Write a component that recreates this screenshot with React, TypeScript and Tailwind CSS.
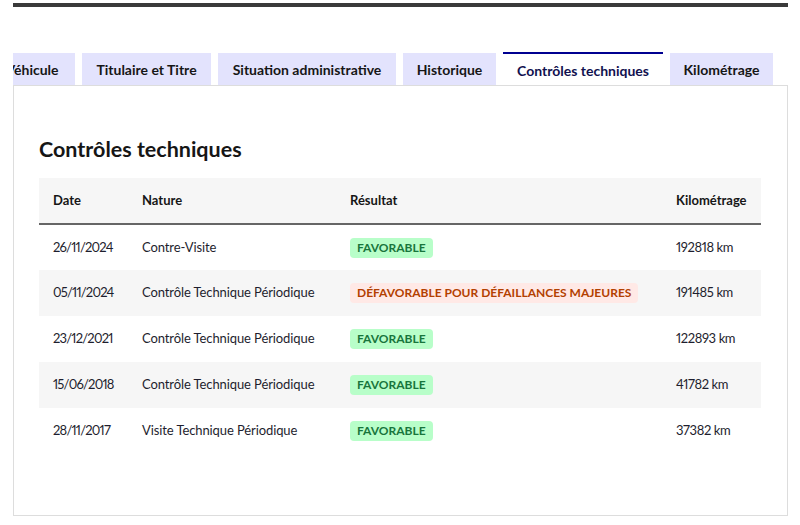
import React from "react";

const tabs = [
  { label: "Véhicule", w: "w-[86px]", first: true },
  { label: "Titulaire et Titre", w: "w-[129px]" },
  { label: "Situation administrative", w: "w-[178px]" },
  { label: "Historique", w: "w-[93px]" },
  { label: "Contrôles techniques", w: "w-[160px]", active: true },
  { label: "Kilométrage", w: "w-[103px]" },
];

const rows = [
  { date: "26/11/2024", nature: "Contre-Visite", ok: true, km: "192818 km" },
  { date: "05/11/2024", nature: "Contrôle Technique Périodique", ok: false, km: "191485 km" },
  { date: "23/12/2021", nature: "Contrôle Technique Périodique", ok: true, km: "122893 km" },
  { date: "15/06/2018", nature: "Contrôle Technique Périodique", ok: true, km: "41782 km" },
  { date: "28/11/2017", nature: "Visite Technique Périodique", ok: true, km: "37382 km" },
];

export default function App() {
  return (
    <div
      className="w-[800px] h-[525px] bg-white overflow-hidden proportional-nums"
      style={{ fontFamily: "Lato, 'Noto Sans', sans-serif" }}
    >
      <div className="ml-[13px] w-[775px] flex flex-col">
        <div className="mt-[3px] h-[4px] bg-[#3a3a3a]" />
        <div className="mt-[44px] h-[34px] flex items-end gap-[7px] overflow-hidden relative z-10">
          {tabs.map((t) =>
            t.active ? (
              <div
                key={t.label}
                className={`${t.w} shrink-0 h-[34px] mb-[-1px] bg-white border-t-2 border-[#000091] flex items-center justify-center text-[14px] font-bold text-[#11114f] whitespace-nowrap`}
              >
                {t.label}
              </div>
            ) : (
              <div
                key={t.label}
                className={`${t.w} shrink-0 h-[32px] bg-[#e3e3fd] flex items-center justify-center text-[14px] font-bold text-[#161616] whitespace-nowrap ${
                  t.first ? "ml-[-24px]" : ""
                }`}
              >
                {t.label}
              </div>
            )
          )}
        </div>
        <div className="h-[431px] border border-[#dddddd] px-[25px]">
          <h2 className="mt-[49px] h-[28px] text-[21.5px] leading-[28px] font-bold text-[#161616]">
            Contrôles techniques
          </h2>
          <table className="mt-[15px] w-[722px] border-collapse text-[13px] text-[#1e1e2e]">
            <thead>
              <tr className="h-[46px] bg-[#f6f6f6] border-b-2 border-[#666666] text-left font-bold text-[#161616]">
                <th className="w-[89px] pl-[14px] font-bold">Date</th>
                <th className="w-[208px] pl-[14px] font-bold">Nature</th>
                <th className="w-[325px] pl-[14px] font-bold">Résultat</th>
                <th className="pl-[15px] font-bold">Kilométrage</th>
              </tr>
            </thead>
            <tbody>
              {rows.map((r, i) => (
                <tr key={r.date} className={`h-[46px] ${i % 2 === 1 ? "bg-[#f6f6f6]" : "bg-white"}`}>
                  <td className="pl-[14px] whitespace-nowrap tracking-[-0.8px]">{r.date}</td>
                  <td className="pl-[14px] whitespace-nowrap tracking-[-0.1px]">{r.nature}</td>
                  <td className="pl-[14px] whitespace-nowrap">
                    {r.ok ? (
                      <span className="inline-flex items-center h-[20px] px-[7px] rounded-[4px] bg-[#b8fec9] text-[#18753c] text-[12px] font-bold uppercase whitespace-nowrap">
                        Favorable
                      </span>
                    ) : (
                      <span className="inline-flex items-center h-[20px] px-[7px] rounded-[4px] bg-[#ffe9e6] text-[#b34000] text-[12px] font-bold uppercase whitespace-nowrap">
                        Défavorable pour défaillances majeures
                      </span>
                    )}
                  </td>
                  <td className="pl-[15px] whitespace-nowrap tracking-[-0.4px]">{r.km}</td>
                </tr>
              ))}
            </tbody>
          </table>
        </div>
      </div>
    </div>
  );
}
